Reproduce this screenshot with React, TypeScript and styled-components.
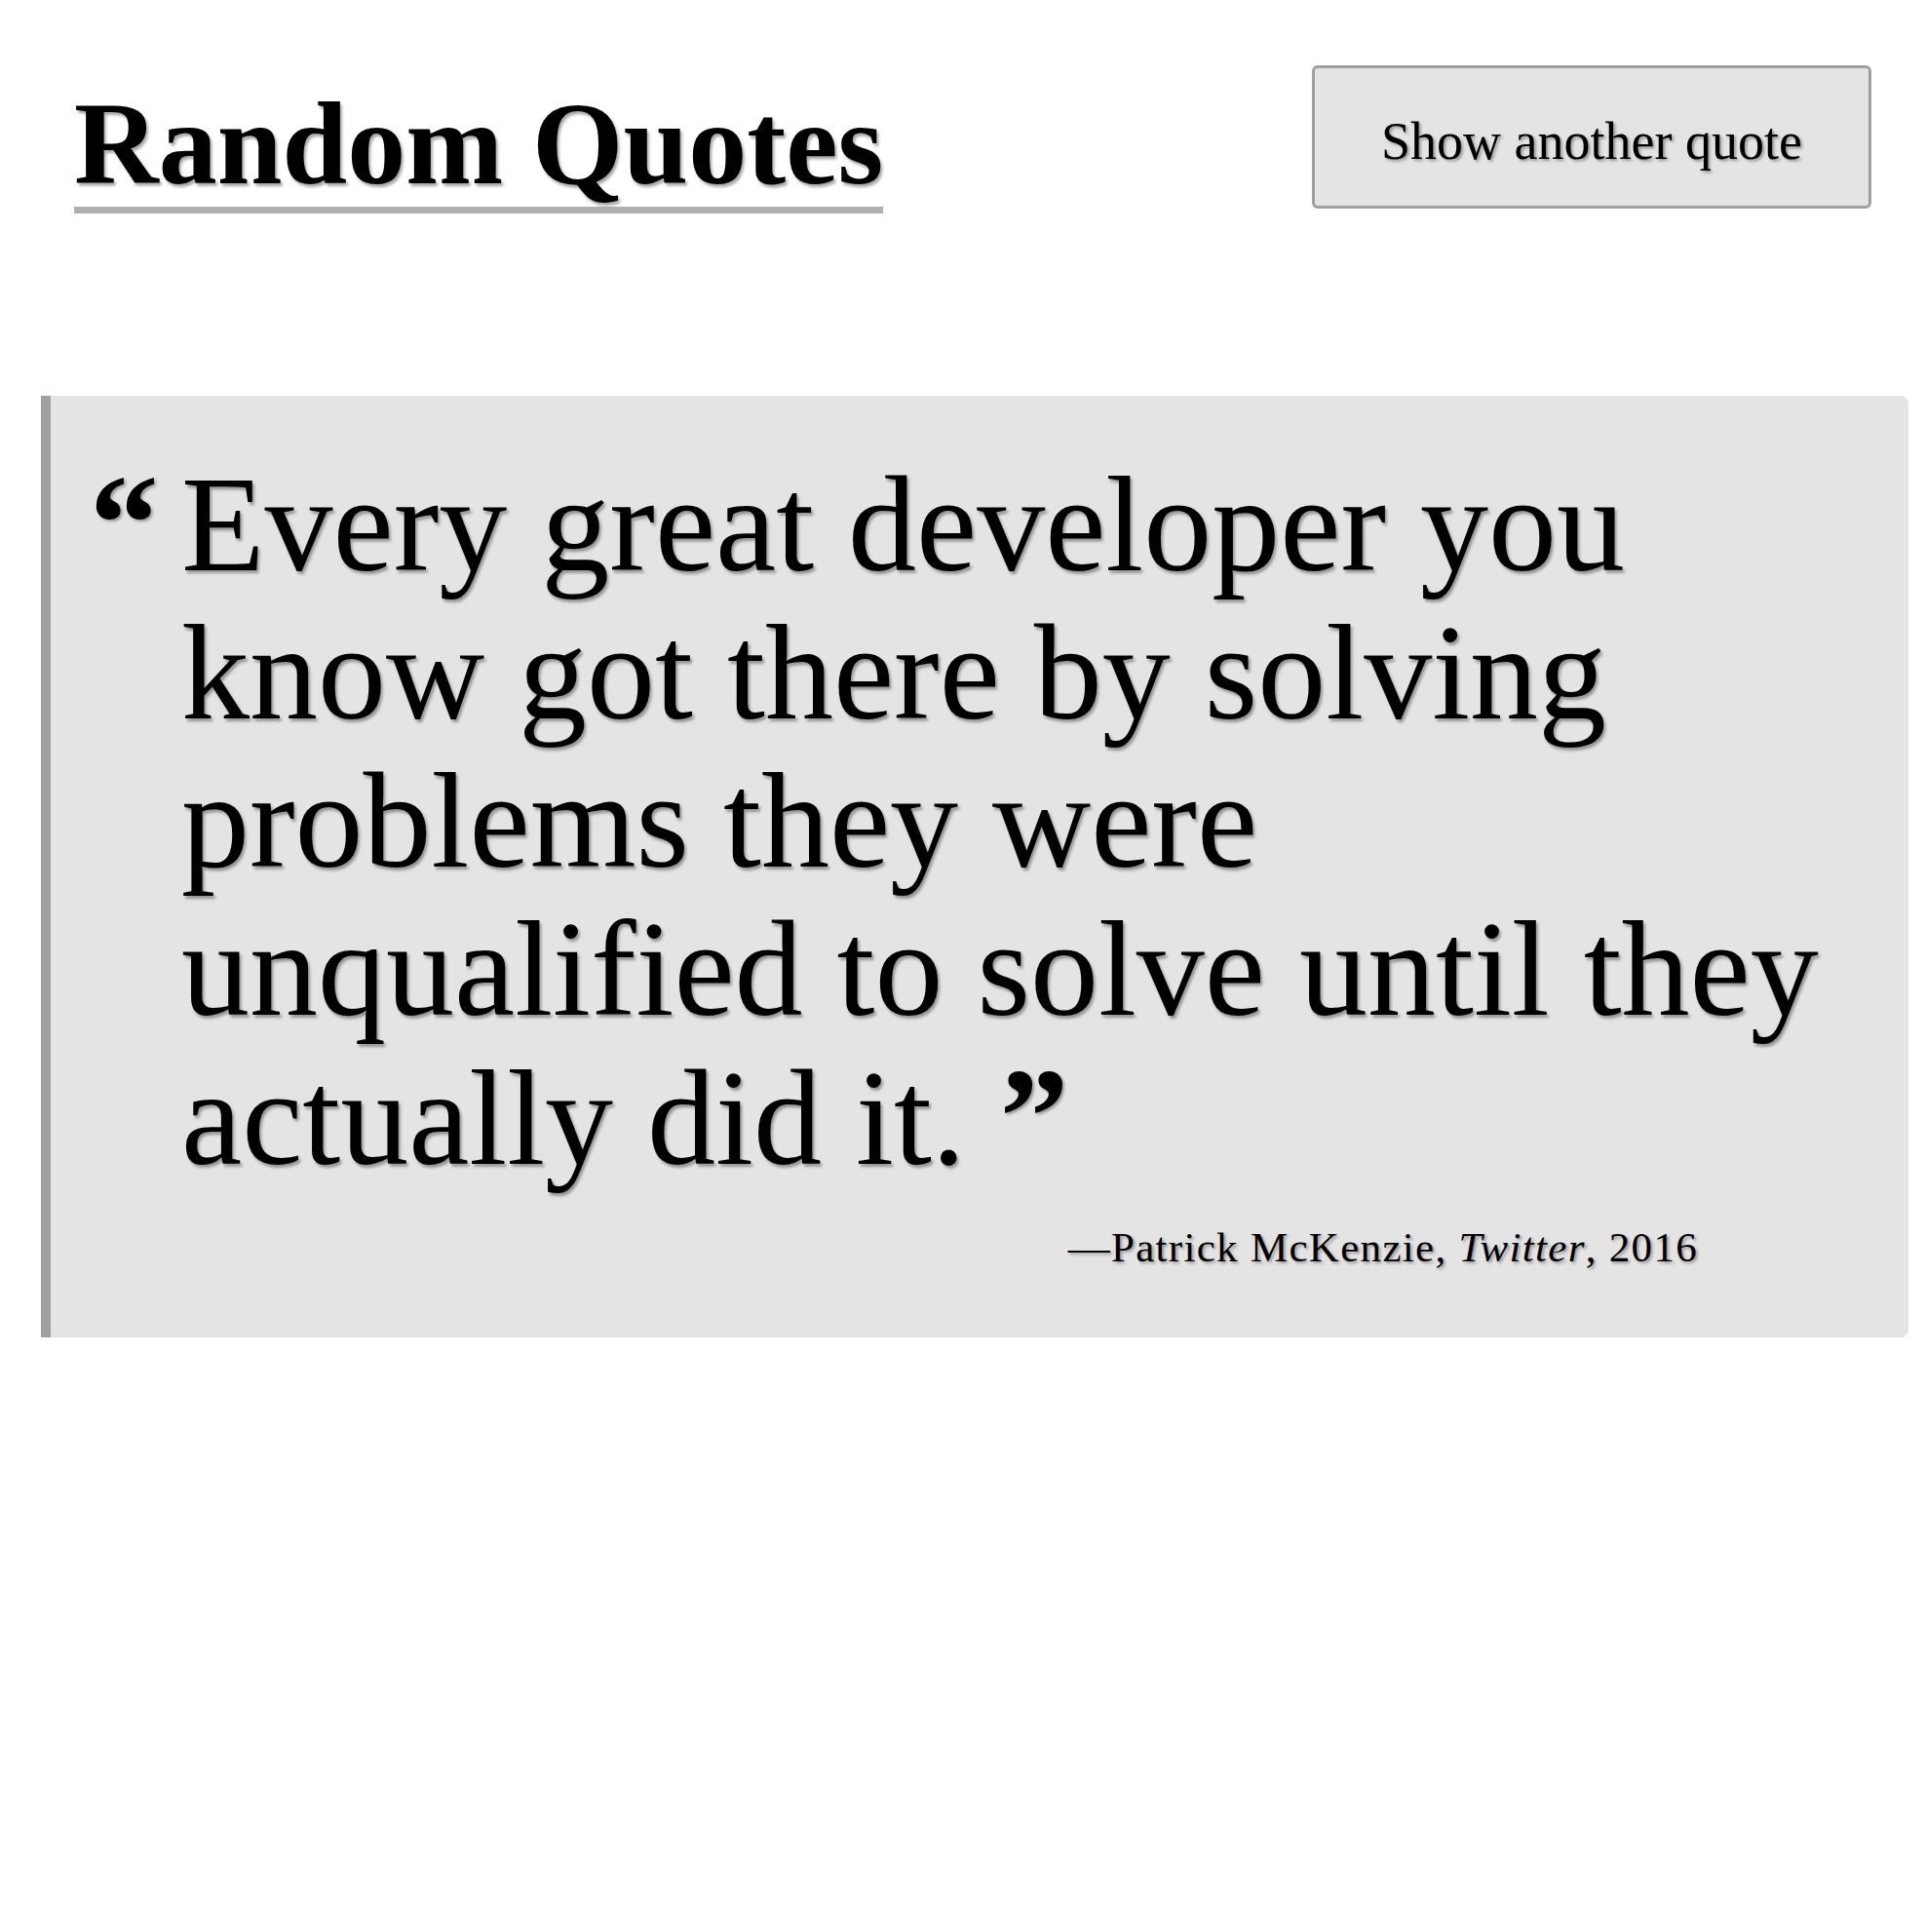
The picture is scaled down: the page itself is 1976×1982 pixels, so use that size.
import React from "react";
import styled, { createGlobalStyle } from "styled-components";

const GlobalStyle = createGlobalStyle`
  html, body {
    margin: 0;
    padding: 0;
    background: #ffffff;
  }
  body {
    font-family: "Liberation Serif", "Times New Roman", serif;
    color: #000000;
  }
`;

const Page = styled.main`
  box-sizing: border-box;
  width: 100%;
  padding: 67px 18px 0 42px;
`;

const Header = styled.header`
  display: flex;
  justify-content: space-between;
  align-items: flex-start;
  padding: 0 38px 0 34px;
`;

const Title = styled.h1`
  margin: 21px 0 0;
  padding: 0 0 4px;
  font-family: "Liberation Serif", "Times New Roman", serif;
  font-weight: 700;
  font-size: 120px;
  line-height: 120px;
  border-bottom: 7px solid #b0b0b0;
  text-shadow: 2px 3px 3px rgba(0, 0, 0, 0.35);
`;

const NextButton = styled.button`
  box-sizing: border-box;
  width: 574px;
  padding: 43px 0 33px;
  background: #e4e4e4;
  border: 3px solid #a0a0a0;
  border-radius: 6px;
  font-family: "Liberation Serif", "Times New Roman", serif;
  font-size: 54px;
  line-height: 65px;
  color: #000000;
  text-align: center;
  text-shadow: 2px 2px 3px rgba(0, 0, 0, 0.35);
  cursor: pointer;
`;

const QuoteCard = styled.blockquote`
  margin: 187px 0 0;
  padding: 55px 32px 65px 40px;
  background: #e4e4e4;
  border-left: 10px solid #a0a0a0;
  border-radius: 0 8px 8px 0;
`;

const QuoteRow = styled.div`
  display: flex;
  align-items: baseline;
`;

const Mark = styled.span`
  font-weight: 700;
  font-size: 141px;
  line-height: 152px;
  text-shadow: 2px 2px 3px rgba(0, 0, 0, 0.35);
`;

const OpenMark = styled(Mark)`
  flex: none;
  width: 94px;
`;

const QuoteText = styled.p`
  flex: 1;
  margin: 0;
  font-size: 140px;
  line-height: 152px;
  font-weight: 400;
  text-shadow: 2px 3px 3px rgba(0, 0, 0, 0.35);
`;

const Attribution = styled.footer`
  margin-top: 30px;
  padding-right: 184px;
  text-align: right;
  font-size: 43px;
  line-height: 54px;
  letter-spacing: 1.3px;
  text-shadow: 2px 2px 3px rgba(0, 0, 0, 0.35);
`;

const Source = styled.cite`
  font-style: italic;
`;

export default function App() {
  return (
    <>
      <GlobalStyle />
      <Page>
        <Header>
          <Title>Random Quotes</Title>
          <NextButton type="button">Show another quote</NextButton>
        </Header>
        <QuoteCard>
          <QuoteRow>
            <OpenMark>“</OpenMark>
            <QuoteText>
              Every great developer you know got there by solving problems they
              were unqualified to solve until they actually did it. <Mark>”</Mark>
            </QuoteText>
          </QuoteRow>
          <Attribution>
            —Patrick McKenzie, <Source>Twitter</Source>, 2016
          </Attribution>
        </QuoteCard>
      </Page>
    </>
  );
}
